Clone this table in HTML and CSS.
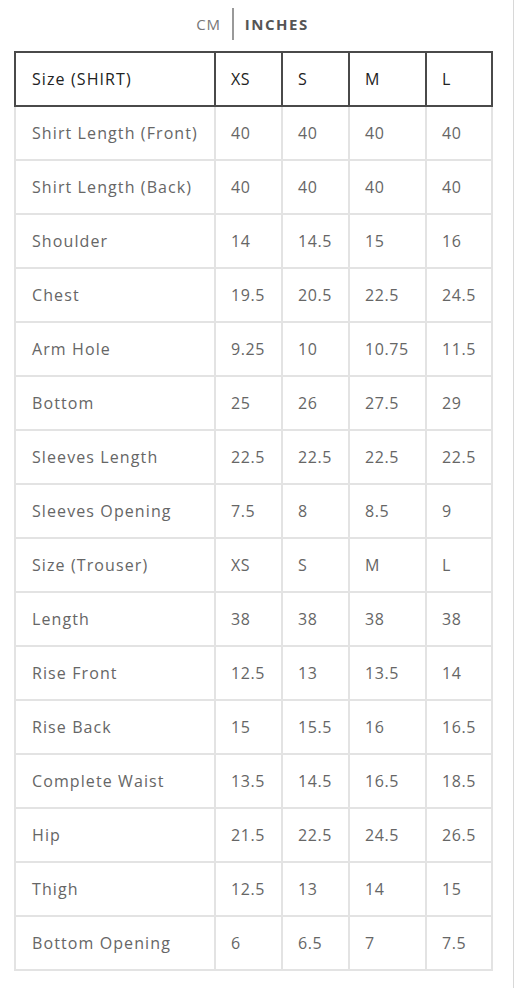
FILE: index.html
```html
<!DOCTYPE html>
<html>
<head>
<meta charset="utf-8">
<link rel="stylesheet" href="styles.css">
</head>
<body>
<div class="page">
  <div class="units">
    <span class="unit">CM</span>
    <span class="divider"></span>
    <span class="unit active">INCHES</span>
  </div>
  <table class="chart">
    <thead>
      <tr><th>Size (SHIRT)</th><th>XS</th><th>S</th><th>M</th><th>L</th></tr>
    </thead>
    <tbody>
      <tr><td>Shirt Length (Front)</td><td>40</td><td>40</td><td>40</td><td>40</td></tr>
      <tr><td>Shirt Length (Back)</td><td>40</td><td>40</td><td>40</td><td>40</td></tr>
      <tr><td>Shoulder</td><td>14</td><td>14.5</td><td>15</td><td>16</td></tr>
      <tr><td>Chest</td><td>19.5</td><td>20.5</td><td>22.5</td><td>24.5</td></tr>
      <tr><td>Arm Hole</td><td>9.25</td><td>10</td><td>10.75</td><td>11.5</td></tr>
      <tr><td>Bottom</td><td>25</td><td>26</td><td>27.5</td><td>29</td></tr>
      <tr><td>Sleeves Length</td><td>22.5</td><td>22.5</td><td>22.5</td><td>22.5</td></tr>
      <tr><td>Sleeves Opening</td><td>7.5</td><td>8</td><td>8.5</td><td>9</td></tr>
      <tr><td>Size (Trouser)</td><td>XS</td><td>S</td><td>M</td><td>L</td></tr>
      <tr><td>Length</td><td>38</td><td>38</td><td>38</td><td>38</td></tr>
      <tr><td>Rise Front</td><td>12.5</td><td>13</td><td>13.5</td><td>14</td></tr>
      <tr><td>Rise Back</td><td>15</td><td>15.5</td><td>16</td><td>16.5</td></tr>
      <tr><td>Complete Waist</td><td>13.5</td><td>14.5</td><td>16.5</td><td>18.5</td></tr>
      <tr><td>Hip</td><td>21.5</td><td>22.5</td><td>24.5</td><td>26.5</td></tr>
      <tr><td>Thigh</td><td>12.5</td><td>13</td><td>14</td><td>15</td></tr>
      <tr><td>Bottom Opening</td><td>6</td><td>6.5</td><td>7</td><td>7.5</td></tr>
    </tbody>
  </table>
</div>
</body>
</html>
```
FILE: styles.css
```css
html, body {
  margin: 0;
  padding: 0;
  background: #fff;
}
body {
  font-family: "Open Sans", "Noto Sans", sans-serif;
}
.page {
  width: 513px;
  min-height: 988px;
  border-right: 1px solid #d8d8d8;
}
.units {
  display: flex;
  justify-content: center;
  align-items: center;
  height: 48px;
  margin-bottom: 3px;
  gap: 11px;
  padding-right: 8px;
  box-sizing: border-box;
}
.unit {
  font-size: 15px;
  letter-spacing: 0.8px;
  color: #777;
}
.unit.active {
  font-weight: 700;
  letter-spacing: 1.5px;
  color: #555;
}
.divider {
  width: 2px;
  height: 32px;
  background: #999;
}
.chart {
  margin-left: 14px;
  width: 479px;
  border-collapse: collapse;
  table-layout: fixed;
  font-size: 16px;
  letter-spacing: 0.6px;
}
.chart th:nth-child(1) { width: 167px; }
.chart th:nth-child(2) { width: 35px; }
.chart th:nth-child(3) { width: 35px; }
.chart th:nth-child(4) { width: 45px; }
.chart th:nth-child(5) { width: 34px; }
.chart th,
.chart td {
  text-align: left;
  padding: 0 15px;
  height: 52px;
  white-space: nowrap;
}
.chart th:first-child,
.chart td:first-child {
  padding-left: 16px;
  letter-spacing: 1.1px;
}
.chart th {
  border: 2px solid #4a4a4a;
  font-weight: 400;
  color: #222;
}
.chart td {
  border: 2px solid #e3e3e3;
  color: #666;
}
.chart tbody tr:first-child td {
  border-top: 2px solid #4a4a4a;
}
```
